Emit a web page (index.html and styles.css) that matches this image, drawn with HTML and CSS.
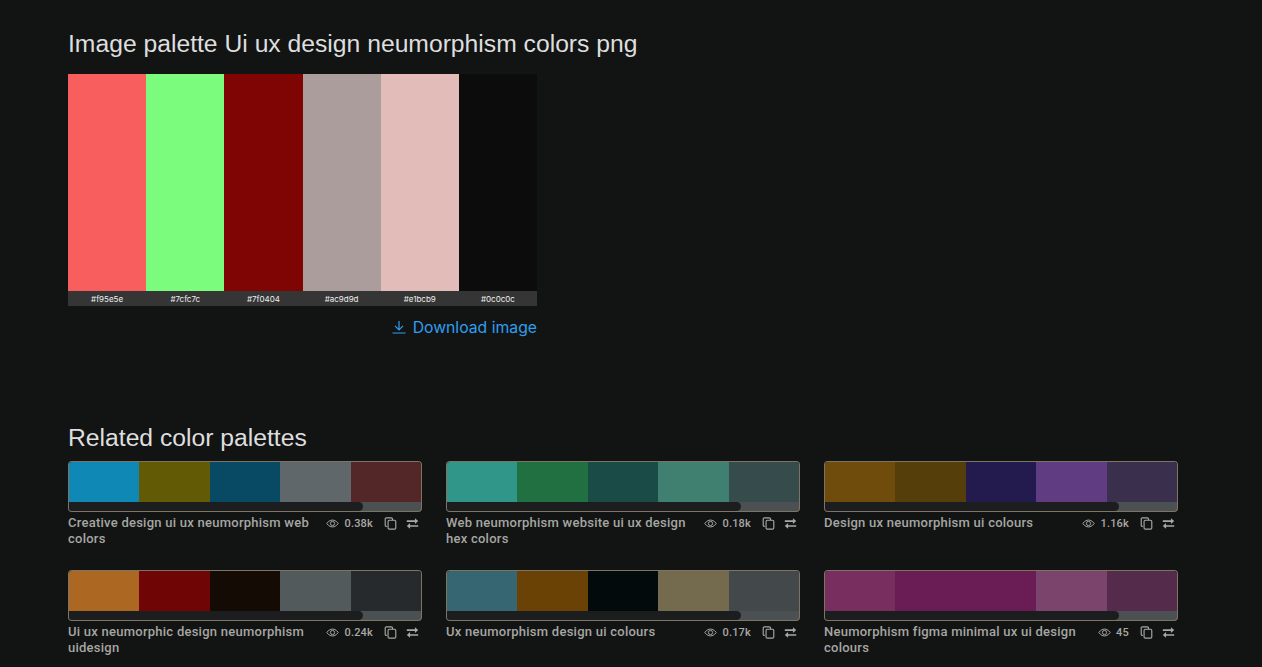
FILE: index.html
```html
<!DOCTYPE html>
<html lang="en">
<head>
<meta charset="UTF-8">
<meta name="viewport" content="width=device-width, initial-scale=1.0">
<link rel="stylesheet" href="styles.css">
</head>
<body>

<svg class="sprite" width="0" height="0">
  <symbol id="eye" viewBox="0 0 16 16">
    <path d="M1 8s2.600-4.300 7-4.300S15 8 15 8s-2.600 4.300-7 4.300S1 8 1 8z" fill="none" stroke="currentColor" stroke-width="1.200"/>
    <circle cx="8" cy="8" r="2.600" fill="none" stroke="currentColor" stroke-width="1.200"/>
  </symbol>
  <symbol id="copy" viewBox="0 0 16 16">
    <rect x="5" y="4" width="9.500" height="11" rx="1.500" fill="none" stroke="currentColor" stroke-width="1.400"/>
    <path d="M3.500 11.500H3A1.500 1.500 0 0 1 1.500 10V2.500A1.500 1.500 0 0 1 3 1h6a1.500 1.500 0 0 1 1.500 1.500V4" fill="none" stroke="currentColor" stroke-width="1.400"/>
  </symbol>
  <symbol id="swap" viewBox="0 0 16 16">
    <path d="M1 4h10V1.500L15 5l-4 3.500V6H1zM15 10H5V7.500L1 11l4 3.500V12h10z" fill="currentColor"/>
  </symbol>
</svg>

<div id="container">
  <h1 class="title">Image palette Ui ux design neumorphism colors png</h1>

  <div class="palette">
    <div class="swatch"><b style="background:#f95e5e"></b><span>#f95e5e</span></div>
    <div class="swatch"><b style="background:#7cfc7c"></b><span>#7cfc7c</span></div>
    <div class="swatch"><b style="background:#7f0404"></b><span>#7f0404</span></div>
    <div class="swatch"><b style="background:#ac9d9d"></b><span>#ac9d9d</span></div>
    <div class="swatch"><b style="background:#e1bcb9"></b><span>#e1bcb9</span></div>
    <div class="swatch"><b style="background:#0c0c0c"></b><span>#0c0c0c</span></div>
  </div>
  <div class="download">
    <a href="#">
      <svg width="14" height="14" viewBox="0 0 14 14"><path d="M7 1v8.500M3 5.800 7 9.800l4-4M.5 13h13" fill="none" stroke="currentColor" stroke-width="1.200"/></svg>
      Download image
    </a>
  </div>

  <h2 class="related">Related color palettes</h2>

  <div class="cards">
    <div class="card">
      <div class="colors">
        <i style="background:#1088b5"></i><i style="background:#625a05"></i><i style="background:#084a63"></i><i style="background:#60676a"></i><i style="background:#532727"></i>
      </div>
      <div class="bar"><div class="fill"></div></div>
      <div class="info">
        <div class="name">Creative design ui ux neumorphism web colors</div>
        <div class="stats">
          <svg class="ic-eye"><use href="#eye"/></svg><span class="views">0.38k</span>
          <svg class="ic"><use href="#copy"/></svg><svg class="ic"><use href="#swap"/></svg>
        </div>
      </div>
    </div>
    <div class="card">
      <div class="colors">
        <i style="background:#31968a"></i><i style="background:#217042"></i><i style="background:#1b4b47"></i><i style="background:#408070"></i><i style="background:#364b4b"></i>
      </div>
      <div class="bar"><div class="fill"></div></div>
      <div class="info">
        <div class="name">Web neumorphism website ui ux design hex colors</div>
        <div class="stats">
          <svg class="ic-eye"><use href="#eye"/></svg><span class="views">0.18k</span>
          <svg class="ic"><use href="#copy"/></svg><svg class="ic"><use href="#swap"/></svg>
        </div>
      </div>
    </div>
    <div class="card">
      <div class="colors">
        <i style="background:#6f4c0b"></i><i style="background:#553e0a"></i><i style="background:#231a4d"></i><i style="background:#603d82"></i><i style="background:#3a2f4c"></i>
      </div>
      <div class="bar"><div class="fill"></div></div>
      <div class="info">
        <div class="name">Design ux neumorphism ui colours</div>
        <div class="stats">
          <svg class="ic-eye"><use href="#eye"/></svg><span class="views">1.16k</span>
          <svg class="ic"><use href="#copy"/></svg><svg class="ic"><use href="#swap"/></svg>
        </div>
      </div>
    </div>
    <div class="card">
      <div class="colors">
        <i style="background:#ac6823"></i><i style="background:#700505"></i><i style="background:#140b05"></i><i style="background:#535a5c"></i><i style="background:#272a2d"></i>
      </div>
      <div class="bar"><div class="fill"></div></div>
      <div class="info">
        <div class="name">Ui ux neumorphic design neumorphism uidesign</div>
        <div class="stats">
          <svg class="ic-eye"><use href="#eye"/></svg><span class="views">0.24k</span>
          <svg class="ic"><use href="#copy"/></svg><svg class="ic"><use href="#swap"/></svg>
        </div>
      </div>
    </div>
    <div class="card">
      <div class="colors">
        <i style="background:#366672"></i><i style="background:#6a4205"></i><i style="background:#020a0c"></i><i style="background:#746a4e"></i><i style="background:#43484b"></i>
      </div>
      <div class="bar"><div class="fill"></div></div>
      <div class="info">
        <div class="name">Ux neumorphism design ui colours</div>
        <div class="stats">
          <svg class="ic-eye"><use href="#eye"/></svg><span class="views">0.17k</span>
          <svg class="ic"><use href="#copy"/></svg><svg class="ic"><use href="#swap"/></svg>
        </div>
      </div>
    </div>
    <div class="card">
      <div class="colors">
        <i style="background:#782e5f"></i><i style="background:#6a1c54"></i><i style="background:#6a1c54"></i><i style="background:#7b446c"></i><i style="background:#542b4a"></i>
      </div>
      <div class="bar"><div class="fill"></div></div>
      <div class="info">
        <div class="name">Neumorphism figma minimal ux ui design colours</div>
        <div class="stats">
          <svg class="ic-eye"><use href="#eye"/></svg><span class="views">45</span>
          <svg class="ic"><use href="#copy"/></svg><svg class="ic"><use href="#swap"/></svg>
        </div>
      </div>
    </div>
  </div>
</div>

</body>
</html>
```
FILE: styles.css
```css
html, body {
  height: 100%;
}

body {
  margin: 0;
  overflow: hidden;
  background-color: #121414;
  color: #dedede;
  font-family: "Liberation Sans", Arial, sans-serif;
}

.sprite {
  display: block;
  height: 0;
}

#container {
  width: 1110px;
  margin-left: 68px;
  padding-top: 30px;
}

.title {
  margin: 0 0 16px;
  font-size: 24.7px;
  font-weight: 400;
  line-height: 28px;
}

.palette {
  display: flex;
  width: 469px;
  height: 232px;
}

.swatch {
  flex: 1;
  display: flex;
  flex-direction: column;
}

.swatch b {
  display: block;
  flex: 1;
}

.swatch span {
  height: 15px;
  background-color: #353535;
  color: #eee;
  font-family: Inter, sans-serif;
  font-size: 8px;
  line-height: 17px;
  text-align: center;
}

.download {
  width: 469px;
  margin-top: 12px;
  text-align: right;
  font-family: Inter, sans-serif;
  font-size: 15.75px;
  line-height: 20px;
}

.download a {
  color: #2e9fee;
  text-decoration: none;
}

.download svg {
  vertical-align: -1px;
  margin-right: 2px;
}

.related {
  margin: 86px 0 9px;
  font-size: 24.7px;
  font-weight: 400;
  line-height: 28px;
}

.cards {
  display: grid;
  grid-template-columns: repeat(3, 354px);
  column-gap: 24px;
}

.card {
  height: 109px;
}

.colors {
  display: flex;
  height: 40px;
  border: 1px solid #7d7463;
  border-bottom: 0;
  border-radius: 4px 4px 0 0;
  overflow: hidden;
}

.colors i {
  flex: 1;
}

.bar {
  height: 9px;
  background-color: #4b5052;
  border: 1px solid #7d7463;
  border-top: 0;
  border-radius: 0 0 4px 4px;
  overflow: hidden;
}

.fill {
  width: 83.5%;
  height: 100%;
  background-color: #1b1d1f;
  border-radius: 0 5px 5px 0;
}

.info {
  display: flex;
  gap: 8px;
  margin-top: 3px;
}

.name {
  flex: 1;
  color: #a6a6a2;
  font-family: Roboto, sans-serif;
  font-size: 13px;
  font-weight: 500;
  letter-spacing: .25px;
  line-height: 16px;
}

.stats {
  display: flex;
  align-items: center;
  height: 16px;
  color: #a8a8a4;
  font-family: Roboto, sans-serif;
  font-size: 11px;
  font-weight: 500;
  letter-spacing: .2px;
  padding-right: 3px;
}

.ic-eye {
  width: 13px;
  height: 13px;
  margin-right: 5px;
}

.views {
  margin-right: 11px;
}

.ic {
  width: 13px;
  height: 13px;
  margin-right: 9px;
}

.ic:last-child {
  margin-right: 0;
}
```
